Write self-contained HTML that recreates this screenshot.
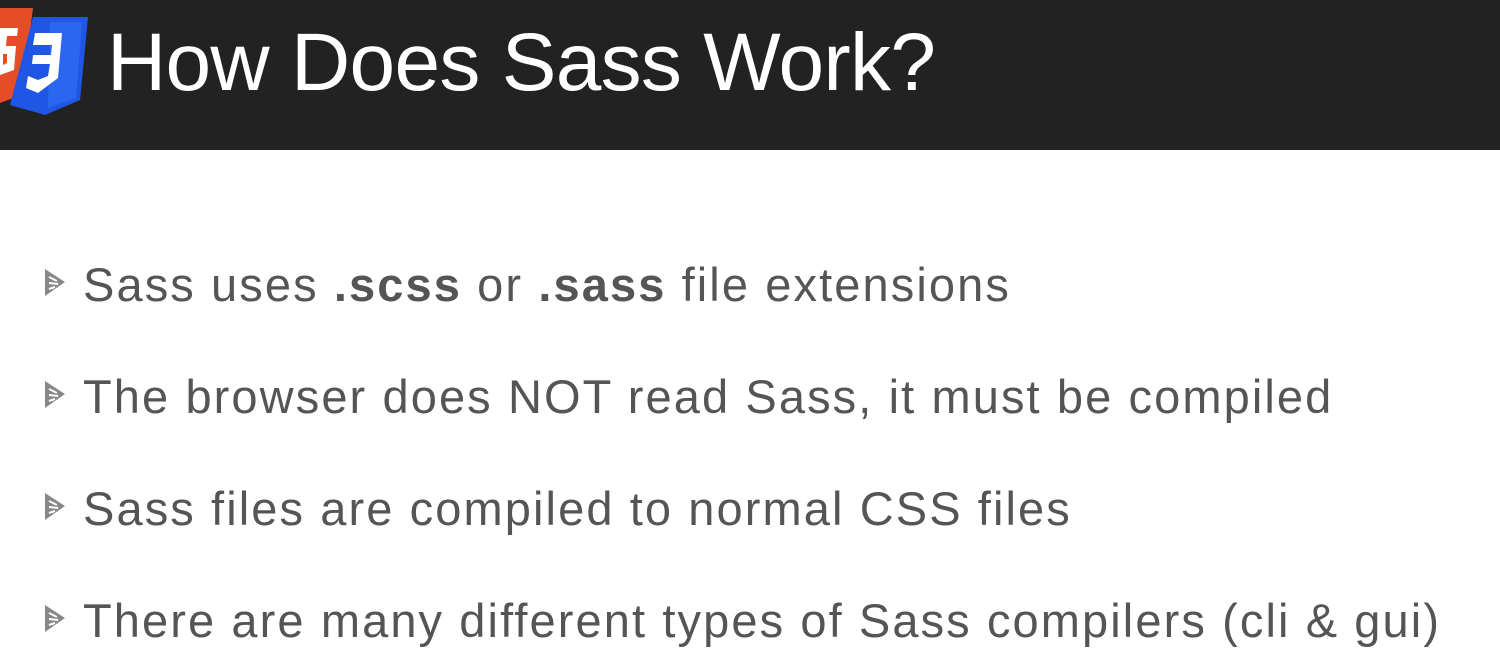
<!DOCTYPE html>
<html><head><style>
body{margin:0;width:1500px;height:670px;background:#fff;overflow:hidden;position:relative;font-family:"Liberation Sans",sans-serif}
.hd{position:absolute;left:0;top:0;width:1500px;height:150px;background:#222;}
.hd h1{position:absolute;left:107px;top:18px;margin:0;font-weight:normal;font-size:82px;color:#fff;line-height:90px;letter-spacing:-0.7px}
.b{position:absolute;left:83px;font-size:47px;color:#555;line-height:50px;white-space:nowrap;letter-spacing:2.1px}
.t{position:absolute;left:43px}
</style></head><body>
<div class="hd">
<svg style="position:absolute;left:0;top:0" width="100" height="120">
<polygon points="-20,8 33,8 22,95 -3,104" fill="#e44d26"/>
<path d="M0,28 L18,28 L17,36 L7,36 L6,46 L16,46 L14,70 L0,75 Z" fill="#fff"/>
<path d="M7,54 L3,54 L3,65 L7,63 Z" fill="#e44d26"/>
<polygon points="33,17 88,17 80,100 45,115 10,105" fill="#1f57e4"/>
<polygon points="50,22 82,22 76,98 48,108" fill="#2a66f0"/>
<path d="M35,33 L62,33 L58,78 L38,93 L26,88 L28,76 L38,80 L48,76 L50,64 L32,64 L33,55 L51,55 L52,45 L33,45 Z" fill="#fff"/>
</svg>
<h1>How Does Sass Work?</h1>
</div>
<svg class="t" style="top:267px" width="24" height="32"><polygon points="2,2 22,15 2,29" fill="#888"/><path d="M6,10 L14,14 M6,16 L15,17 M6,22 L12,20" stroke="#fff" stroke-width="2"/></svg>
<div class="b" style="top:260px">Sass uses <b>.scss</b> or <b>.sass</b> file extensions</div>
<svg class="t" style="top:379px" width="24" height="32"><polygon points="2,2 22,15 2,29" fill="#888"/><path d="M6,10 L14,14 M6,16 L15,17 M6,22 L12,20" stroke="#fff" stroke-width="2"/></svg>
<div class="b" style="top:372px">The browser does NOT read Sass, it must be compiled</div>
<svg class="t" style="top:491px" width="24" height="32"><polygon points="2,2 22,15 2,29" fill="#888"/><path d="M6,10 L14,14 M6,16 L15,17 M6,22 L12,20" stroke="#fff" stroke-width="2"/></svg>
<div class="b" style="top:484px">Sass files are compiled to normal CSS files</div>
<svg class="t" style="top:603px" width="24" height="32"><polygon points="2,2 22,15 2,29" fill="#888"/><path d="M6,10 L14,14 M6,16 L15,17 M6,22 L12,20" stroke="#fff" stroke-width="2"/></svg>
<div class="b" style="top:596px">There are many different types of Sass compilers (cli &amp; gui)</div>
</body></html>
